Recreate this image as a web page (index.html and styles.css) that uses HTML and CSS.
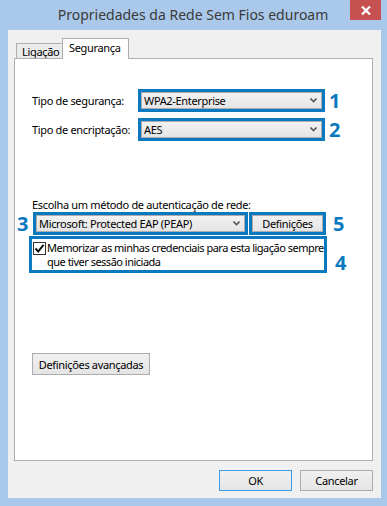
FILE: index.html
```html
<!DOCTYPE html>
<html lang="pt">
<head>
<meta charset="utf-8">
<title>Propriedades da Rede Sem Fios eduroam</title>
<link rel="stylesheet" href="styles.css">
</head>
<body>
<div class="window">
  <div class="titlebar">
    <div class="title">Propriedades da Rede Sem Fios eduroam</div>
    <div class="close">
      <svg width="10" height="9" viewBox="0 0 10 9"><path d="M1 0.5 L9 8.5 M9 0.5 L1 8.5" stroke="#fff" stroke-width="2.2"/></svg>
    </div>
  </div>
  <div class="client">
    <div class="tabs">
      <div class="tab">Ligação</div>
      <div class="tab active">Segurança</div>
    </div>
    <div class="panel">
      <div class="row row1">
        <div class="label">Tipo de segurança:</div>
        <div class="hl combo-hl"><div class="combo"><span>WPA2-Enterprise</span><svg class="chev" width="7" height="5" viewBox="0 0 7 5"><path d="M0.5 0.5 L3.5 3.5 L6.5 0.5" fill="none" stroke="#5a5a5a" stroke-width="1.6"/></svg></div></div>
        <div class="num">1</div>
      </div>
      <div class="row row2">
        <div class="label">Tipo de encriptação:</div>
        <div class="hl combo-hl"><div class="combo"><span>AES</span><svg class="chev" width="7" height="5" viewBox="0 0 7 5"><path d="M0.5 0.5 L3.5 3.5 L6.5 0.5" fill="none" stroke="#5a5a5a" stroke-width="1.6"/></svg></div></div>
        <div class="num">2</div>
      </div>
      <div class="method-label">Escolha um método de autenticação de rede:</div>
      <div class="row row3">
        <div class="num num3">3</div>
        <div class="hl eap-hl"><div class="combo"><span>Microsoft: Protected EAP (PEAP)</span><svg class="chev" width="7" height="5" viewBox="0 0 7 5"><path d="M0.5 0.5 L3.5 3.5 L6.5 0.5" fill="none" stroke="#5a5a5a" stroke-width="1.6"/></svg></div></div>
        <div class="hl def-hl"><div class="btn inner-btn">Definições</div></div>
        <div class="num num5">5</div>
      </div>
      <div class="row row4">
        <div class="hl check-hl">
          <div class="checkbox"><svg width="11" height="11" viewBox="0 0 11 11"><path d="M1.5 5.5 L4.2 8.5 L9.5 1.8" fill="none" stroke="#111" stroke-width="2"/></svg></div>
          <div class="check-text">Memorizar as minhas credenciais para esta ligação sempre<br>que tiver sessão iniciada</div>
        </div>
        <div class="num num4">4</div>
      </div>
      <div class="btn adv">Definições avançadas</div>
    </div>
    <div class="buttons">
      <div class="btn dlg default">OK</div>
      <div class="btn dlg">Cancelar</div>
    </div>
  </div>
</div>
</body>
</html>
```
FILE: styles.css
```css
* { box-sizing: border-box; }
html, body { margin: 0; padding: 0; }
body {
  width: 387px;
  height: 506px;
  background: #aac9ea;
  font-family: "Noto Sans", "Open Sans", sans-serif;
  font-size: 11px;
  letter-spacing: -0.33px;
  color: #000;
  overflow: hidden;
  white-space: nowrap;
}
.window { width: 387px; height: 506px; display: flex; flex-direction: column; }
.titlebar {
  height: 30px;
  display: flex;
  align-items: flex-start;
  padding-left: 36px;
  padding-right: 6px;
}
.title {
  flex: 1;
  text-align: center;
  font-size: 14px;
  letter-spacing: 0;
  line-height: 30px;
  color: #3a3a3a;
}
.close {
  width: 31px;
  height: 20px;
  background: #c75050;
  display: flex;
  align-items: center;
  justify-content: center;
}
.client {
  margin: 0 6px 0 8px;
  height: 468px;
  background: #f0f0f0;
  padding: 8px 8px 0 6px;
  display: flex;
  flex-direction: column;
}
.tabs { display: flex; align-items: flex-end; padding-left: 2px; height: 20px; }
.tab {
  height: 15px;
  padding: 0 0 0 5px;
  border: 1px solid #adadad;
  border-bottom: none;
  background: #ebebeb;
  line-height: 15px;
  width: 47px;
}
.tab.active {
  height: 21px;
  width: 67px;
  margin-left: -1px;
  margin-bottom: -1px;
  background: #fff;
  line-height: 17px;
  padding-left: 6px;
  position: relative;
  z-index: 1;
}
.panel {
  height: 403px;
  background: #fff;
  border: 1px solid #adadad;
  padding: 30px 0 0 17px;
  display: flex;
  flex-direction: column;
  align-items: flex-start;
}
.row { display: flex; align-items: center; }
.row2 { margin-top: 6px; }
.label { width: 106px; }
.hl { border: 3px solid #0a79c0; }
.combo-hl { width: 187px; height: 23px; }
.combo {
  height: 100%;
  border: 1px solid #acacac;
  background: linear-gradient(#f2f2f2, #e5e5e5);
  display: flex;
  align-items: center;
  padding: 0 4px 0 2px;
}
.combo span { flex: 1; }
.chev { display: block; }
.num {
  font-family: "Open Sans", "Noto Sans", sans-serif;
  font-weight: 700;
  font-size: 20px;
  letter-spacing: 0;
  line-height: 20px;
  color: #0a79c0;
  margin-left: 4px;
}
.method-label { margin-top: 56px; line-height: 15px; }
.row3 { margin-left: -15px; }
.num3 { margin-left: 0; width: 16px; }
.eap-hl { width: 215px; height: 23px; }
.def-hl { width: 77px; height: 23px; margin-left: 1px; }
.num5 { margin-left: 7px; }
.btn {
  border: 1px solid #acacac;
  background: linear-gradient(#f0f0f0, #e5e5e5);
  display: flex;
  align-items: center;
  justify-content: center;
}
.inner-btn { height: 100%; }
.row4 { margin-left: -3px; margin-top: 1px; align-items: flex-end; }
.check-hl {
  width: 298px;
  height: 37px;
  display: flex;
  align-items: flex-start;
  padding: 2px 0 0 1px;
}
.checkbox {
  width: 13px;
  height: 13px;
  border: 1px solid #333;
  background: #fff;
  margin-top: 1px;
  display: flex;
  align-items: center;
  justify-content: center;
}
.check-text { margin-left: 1px; line-height: 14px; letter-spacing: -0.5px; }
.num4 { margin-left: 8px; }
.adv { margin-top: 80px; width: 118px; height: 22px; }
.buttons { display: flex; justify-content: flex-end; gap: 8px; margin-top: 9px; }
.dlg { width: 73px; height: 21px; }
.dlg.default { border-color: #3c9ee6; }
```
